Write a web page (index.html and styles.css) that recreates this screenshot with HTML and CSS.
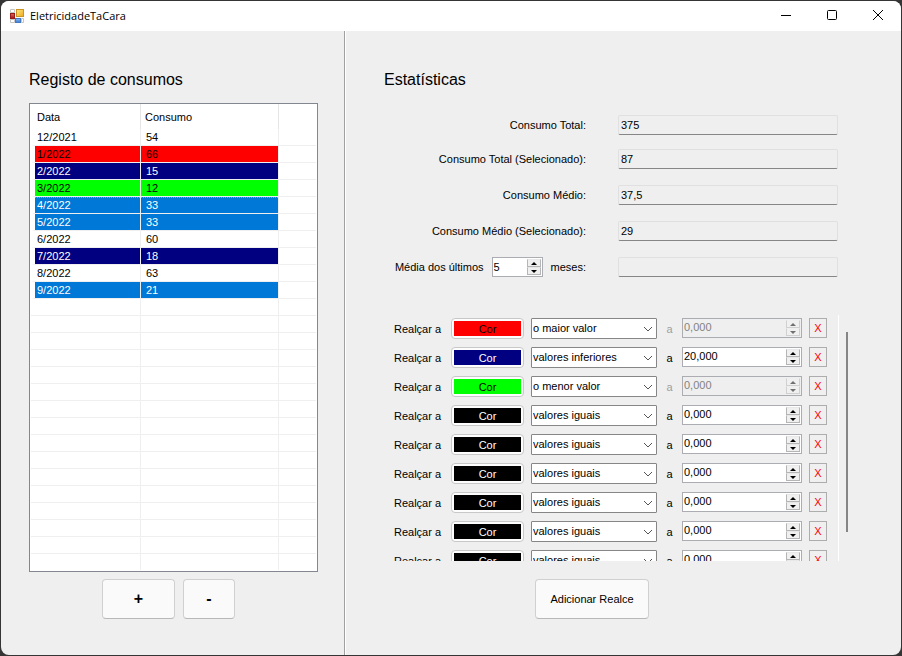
FILE: index.html
```html
<!DOCTYPE html>
<html lang="pt">
<head>
<meta charset="utf-8">
<title>EletricidadeTaCara</title>
<link rel="stylesheet" href="styles.css">
</head>
<body>
<div class="window">
  <header class="titlebar">
    <svg class="app-icon" width="14" height="14" viewBox="0 0 14 14" aria-hidden="true">
      <defs>
        <linearGradient id="gold" x1="0" y1="0" x2="1" y2="1"><stop offset="0" stop-color="#ffe880"/><stop offset="1" stop-color="#eda81a"/></linearGradient>
        <linearGradient id="ruby" x1="0" y1="0" x2="0" y2="1"><stop offset="0" stop-color="#e06a5a"/><stop offset="1" stop-color="#a01414"/></linearGradient>
        <linearGradient id="sky" x1="0" y1="0" x2="0" y2="1"><stop offset="0" stop-color="#8cbcf4"/><stop offset="1" stop-color="#3878d0"/></linearGradient>
      </defs>
      <path d="M0.5 0.5h4v3h-4zM0.5 10.5h4v3h-4zM11.5 9.5h2v4h-2z" fill="#fff" stroke="#c4c4c4"/>
      <rect x="0.5" y="4.5" width="4" height="5" fill="url(#ruby)" stroke="#981c1c"/>
      <rect x="6.5" y="0.5" width="7" height="7" fill="url(#gold)" stroke="#c99422"/>
      <rect x="5.5" y="9.5" width="5" height="4" fill="url(#sky)" stroke="#4479c4"/>
    </svg>
    <span class="app-title">EletricidadeTaCara</span>
    <button class="caption" aria-label="Minimizar"><svg width="12" height="12" viewBox="0 0 12 12"><path d="M1 5.5h10"/></svg></button>
    <button class="caption" aria-label="Maximizar"><svg width="12" height="12" viewBox="0 0 12 12"><rect x="1.5" y="0.5" width="9" height="9" rx="1"/></svg></button>
    <button class="caption" aria-label="Fechar"><svg width="12" height="12" viewBox="0 0 12 12"><path d="M1 0l10 10M11 0L1 10"/></svg></button>
  </header>
  <main class="panels">
    <section class="panel records">
      <h1>Registo de consumos</h1>
      <div class="list">
        <table>
          <thead><tr><th class="date">Data</th><th class="value">Consumo</th><th></th></tr></thead>
          <tbody>
            <tr><td>12/2021</td><td>54</td><td></td></tr>
            <tr class="red"><td>1/2022</td><td>66</td><td></td></tr>
            <tr class="navy"><td>2/2022</td><td>15</td><td></td></tr>
            <tr class="lime"><td>3/2022</td><td>12</td><td></td></tr>
            <tr class="selected focused"><td>4/2022</td><td>33</td><td></td></tr>
            <tr class="selected"><td>5/2022</td><td>33</td><td></td></tr>
            <tr><td>6/2022</td><td>60</td><td></td></tr>
            <tr class="navy"><td>7/2022</td><td>18</td><td></td></tr>
            <tr><td>8/2022</td><td>63</td><td></td></tr>
            <tr class="selected"><td>9/2022</td><td>21</td><td></td></tr>
          </tbody>
        </table>
        <div class="blank-rows"></div>
      </div>
      <div class="list-actions">
        <button class="push add">+</button>
        <button class="push remove">-</button>
      </div>
    </section>
    <section class="panel statistics">
      <h1>Estatísticas</h1>
      <div class="stats">
        <div class="totals">
          <div class="stat"><label for="total">Consumo Total:</label><input id="total" class="result" readonly value="375"></div>
          <div class="stat"><label for="total-sel">Consumo Total (Selecionado):</label><input id="total-sel" class="result" readonly value="87"></div>
        </div>
        <div class="stat"><label for="mean">Consumo Médio:</label><input id="mean" class="result" readonly value="37,5"></div>
        <div class="stat"><label for="mean-sel">Consumo Médio (Selecionado):</label><input id="mean-sel" class="result" readonly value="29"></div>
        <div class="stat">
          <div class="months">
            <label for="months">Média dos últimos</label>
            <div class="spin"><input id="months" value="5"><span class="arrows"><button aria-label="Mais"></button><button aria-label="Menos"></button></span></div>
            <label for="recent">meses:</label>
          </div>
          <input id="recent" class="result" readonly>
        </div>
      </div>
      <div class="rules-area">
        <div class="rules" id="rules"></div>
        <div class="scroll"><div class="thumb"></div></div>
      </div>
      <button class="push add-rule">Adicionar Realce</button>
    </section>
  </main>
</div>
<script src="script.js"></script>
</body>
</html>
```
FILE: styles.css
```css
* { box-sizing: border-box; }

body {
  margin: 0;
  background: #353535;
  color: #000;
  font: 11px/16px "Liberation Sans", Arial, sans-serif;
}

button, input, select { font: inherit; color: inherit; margin: 0; padding: 0; }
label { white-space: nowrap; }

.window {
  display: flex;
  flex-direction: column;
  min-height: calc(100vh - 2px);
  margin: 1px;
  border-radius: 8px;
  overflow: hidden;
  background: #efefef;
}

.titlebar { display: flex; align-items: center; height: 30px; padding-left: 9px; background: #fff; }
.app-title { flex: 1; margin-left: 6px; font: 11px/16px "Open Sans", "Noto Sans", sans-serif; }
.caption { display: grid; place-items: center; width: 46px; height: 30px; border: 0; background: none; }
.caption svg { fill: none; stroke: #000; }

.panels { flex: 1; display: grid; grid-template-columns: 344fr 556fr; }
.panel { display: flex; flex-direction: column; min-width: 0; padding: 39px 26px 36px 28px; }
.records { border-right: 1px solid #a0a0a0; }
.statistics { padding-left: 39px; padding-right: 52px; box-shadow: inset 1px 0 #fff; }
h1 { margin: 0; font-size: 16px; line-height: 20px; font-weight: 400; }

.list {
  flex: 1;
  display: flex;
  flex-direction: column;
  margin-top: 13px;
  padding: 0 1px 1px;
  border: 1px solid #828790;
  background: #fff;
}
table { width: 100%; border-collapse: separate; border-spacing: 0; table-layout: fixed; }
th { height: 25px; padding: 0 4px; border-right: 1px solid #e5e5e5; font-weight: 400; text-align: left; }
th:first-child { padding-left: 6px; }
th:last-child { border-right: 0; }
.date { width: 110px; }
.value { width: 138px; }
td { height: 17px; padding: 0 5px; border-right: 1px solid #efefef; border-bottom: 1px solid #efefef; line-height: 16px; }
td:first-child { border-left: 4px solid #fff; padding-left: 2px; }
td:last-child { border-right: 0; }
th, td { white-space: nowrap; }
.red td:not(:last-child) { background: #f00; }
.navy td:not(:last-child) { background: #000080; color: #fff; }
.lime td:not(:last-child) { background: #0f0; }
.selected td:not(:last-child) { background: #0078d7; color: #fff; }
.focused td:not(:last-child) { background: linear-gradient(90deg, #ff8728 50%, #0078d7 50%) 0 0 / 2px 1px repeat-x #0078d7; }
.blank-rows {
  flex: 1;
  background:
    linear-gradient(#efefef, #efefef) 109px 0 / 1px 100% no-repeat,
    linear-gradient(#efefef, #efefef) 247px 0 / 1px 100% no-repeat,
    repeating-linear-gradient(#fff 0 16px, #efefef 16px 17px);
}

.push {
  height: 40px;
  border: 1px solid #d0d0d0;
  border-bottom-color: #b8b8b8;
  border-radius: 4px;
  background: #fafafa;
}
.list-actions { display: flex; justify-content: center; gap: 8px; margin: 7px 10px 0 0; }
.add, .remove { font-size: 16px; font-weight: 700; }
.add { width: 73px; }
.remove { width: 52px; }

.stats { display: flex; flex-direction: column; gap: 16px; margin: 25px 11px 0 0; }
.totals { display: flex; flex-direction: column; gap: 14px; }
.stat { display: flex; align-items: center; justify-content: flex-end; gap: 32px; height: 20px; }
.result {
  width: 220px;
  height: 20px;
  padding: 0 2px;
  border: 1px solid #e0e0e0;
  border-bottom-color: #868686;
  border-radius: 2px;
  background: #efefef;
}
.months { display: flex; align-items: center; gap: 8px; }
.months .spin { width: 51px; }

.spin { display: flex; height: 20px; padding: 1px; border: 1px solid #abadb3; background: #fff; }
.spin input { flex: 1; min-width: 0; border: 0; background: none; }
.arrows { display: flex; flex-direction: column; width: 14px; }
.arrows button { flex: 1; display: grid; place-items: center; min-height: 0; border: 1px solid #b5b5b5; border-top-color: #e8e8e8; background: #f0f0f0; }
.arrows button::before { content: ""; border: 3px solid transparent; border-top: 0; border-bottom-color: #000; }
.arrows button:last-child::before { border-top: 3px solid #000; border-bottom: 0; }
.spin.off { background: #efefef; color: #838383; }
.spin.off .arrows button { border-color: #d0d0d0; border-top-color: #efefef; }
.spin.off .arrows button::before { border-bottom-color: #707070; }
.spin.off .arrows button:last-child::before { border-top-color: #707070; }

.rules-area { flex: 1 0 246px; height: 246px; display: flex; justify-content: space-between; margin-top: 38px; }
.rules { flex: 1; height: 246px; overflow: hidden; padding: 3px 11px 0 10px; border-right: 1px solid #fff; }
.rule { display: grid; grid-template-columns: 50px 73px 126px 11px 120px 18px; column-gap: 7px; align-items: center; height: 21px; margin-bottom: 8px; }
.rule .spin { align-self: start; }
.rule .spin input { height: 14px; }
.limit-label { text-align: center; }
.muted { color: #a0a0a0; }
.colour { height: 21px; padding: 2px; border: 1px solid #c8c8c8; border-radius: 4px; background: #fdfdfd; }
.colour span { display: block; height: 15px; line-height: 16px; }
.colour .red { background: #f00; }
.colour .navy { background: #000080; color: #fff; }
.colour .lime { background: #0f0; }
.colour .black { background: #000; color: #fff; }
.condition { position: relative; display: flex; }
.condition select { width: 100%; height: 21px; padding: 0 18px 1px 1px; border: 1px solid #868686; border-radius: 1px; background: #fff; appearance: none; }
.condition svg { position: absolute; right: 4px; top: 8px; fill: none; stroke: #555; pointer-events: none; }
.delete { align-self: start; height: 20px; border: 1px solid #adadad; background: #f0f0f0; color: #f00; }
.scroll { width: 10px; padding-top: 17px; }
.thumb { width: 2px; height: 200px; margin-left: 7px; background: #858585; }
.add-rule { align-self: flex-start; width: 114px; margin: 18px 0 0 151px; }
```
FILE: script.js
```js
const rules = [
  ["red", "o maior valor", "0,000", true],
  ["navy", "valores inferiores", "20,000", false],
  ["lime", "o menor valor", "0,000", true],
  ...Array.from({ length: 6 }, () => ["black", "valores iguais", "0,000", false]),
];
const conditions = ["o maior valor", "o menor valor", "valores inferiores", "valores iguais"];

document.getElementById("rules").innerHTML = rules.map(([colour, condition, value, off], i) => `
  <div class="rule">
    <label for="condition-${i}">Realçar a</label>
    <button class="colour"><span class="${colour}">Cor</span></button>
    <div class="condition">
      <select id="condition-${i}">${conditions.map(c => `<option${c === condition ? " selected" : ""}>${c}</option>`).join("")}</select>
      <svg width="10" height="6" viewBox="0 0 10 6"><path d="M1 1l4 4 4-4"/></svg>
    </div>
    <label class="limit-label ${off ? "muted" : ""}" for="limit-${i}">a</label>
    <div class="spin ${off ? "off" : ""}">
      <input id="limit-${i}" value="${value}"${off ? " disabled" : ""}>
      <span class="arrows"><button aria-label="Mais"></button><button aria-label="Menos"></button></span>
    </div>
    <button class="delete" aria-label="Remover">X</button>
  </div>`).join("");
```
